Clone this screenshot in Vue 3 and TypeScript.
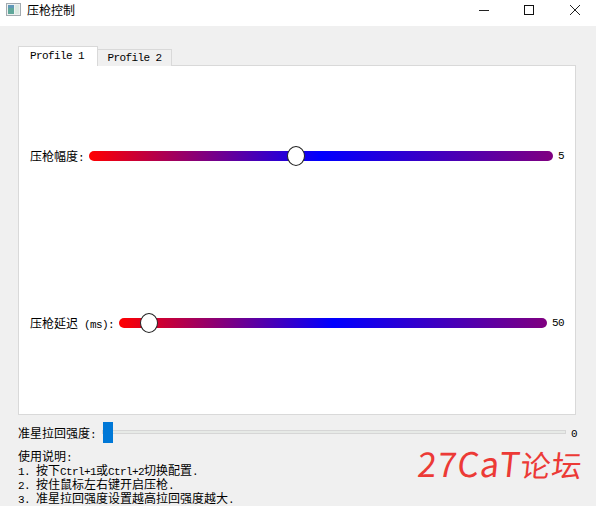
<script setup lang="ts">
const sliders = [
  { id: 1, name: "压枪幅度", unit: ":", value: "5", pos: 0.447 },
  { id: 2, name: "压枪延迟", unit: " (ms):", value: "50", pos: 0.07 },
];
</script>

<template>
  <div class="window">
    <div class="titlebar">
      <svg class="app-icon" width="16" height="16" viewBox="0 0 16 16">
        <rect x="0.5" y="1.5" width="14" height="12" fill="#eef0f0" stroke="#a3abb0" />
        <rect x="2" y="3" width="6" height="9" fill="#5fa79a" />
        <rect x="2" y="3" width="6" height="3" fill="#5f97b8" />
        <rect x="9" y="3" width="4" height="9" fill="#dbe9e2" />
      </svg>
      <span class="title">压枪控制</span>
      <div class="controls">
        <svg width="12" height="12" viewBox="0 0 12 12"><path d="M2 6.5h10" stroke="#222" fill="none" /></svg>
        <svg width="12" height="12" viewBox="0 0 12 12"><rect x="1.5" y="1.5" width="9" height="9" stroke="#111" fill="none" /></svg>
        <svg width="12" height="12" viewBox="0 0 12 12"><path d="M1 1l10 10M11 1L1 11" stroke="#222" fill="none" /></svg>
      </div>
    </div>

    <div class="page">
      <div class="tabs">
        <div class="tab active">Profile 1</div>
        <div class="tab">Profile 2</div>
      </div>

      <div class="pane">
        <div v-for="s in sliders" :key="s.id" class="row">
          <span class="cjk label">{{ s.name }}<span class="lat">{{ s.unit }}</span></span>
          <div class="track">
            <div class="knob" :style="{ left: s.pos * 100 + '%' }"></div>
          </div>
          <span class="lat">{{ s.value }}</span>
        </div>
      </div>

      <div class="strength">
        <span class="cjk label">准星拉回强度<span class="lat">:</span></span>
        <div class="groove">
          <div class="block"></div>
        </div>
        <span class="lat zero">0</span>
      </div>

      <div class="help cjk">
        <div class="line">使用说明<span class="lat">:</span></div>
        <div class="line"><span class="lat">1. </span>按下<span class="lat">Ctrl+1</span>或<span class="lat">Ctrl+2</span>切换配置<span class="lat">.</span></div>
        <div class="line"><span class="lat">2. </span>按住鼠标左右键开启压枪<span class="lat">.</span></div>
        <div class="line"><span class="lat">3. </span>准星拉回强度设置越高拉回强度越大<span class="lat">.</span></div>
      </div>

      <div class="mark">27CaT<span class="mark-cjk">论坛</span></div>
    </div>
  </div>
</template>

<style>
html,
body {
  margin: 0;
  overflow: hidden;
}
</style>

<style scoped>
.window {
  width: 596px;
  height: 506px;
  overflow: hidden;
  display: flex;
  flex-direction: column;
  background: #f0f0f0;
  color: #000;
}

.titlebar {
  height: 20px;
  padding: 0 0 6px 6px;
  flex: none;
  display: flex;
  align-items: center;
  background: #fff;
}

.app-icon {
  margin-right: 5px;
}

.title {
  font: 12px/16px "Noto Sans CJK SC", sans-serif;
}

.controls {
  margin-left: auto;
  display: flex;
  gap: 34px;
  padding-right: 15px;
}

.page {
  position: relative;
  flex: 1;
  padding: 20px 18px 0;
}

.tabs {
  display: flex;
  align-items: flex-end;
  height: 20px;
  margin-bottom: -1px;
}

.tab {
  position: relative;
  width: 73px;
  height: 16px;
  border: 1px solid #d9d9d9;
  border-bottom: 0;
  background: #f0f0f0;
  font: 11px/16px "Liberation Mono", monospace;
  letter-spacing: -0.6px;
  text-align: center;
  white-space: pre;
}

.tab.active {
  width: 76px;
  height: 19px;
  padding-right: 2px;
  line-height: 19px;
  background: #fff;
  z-index: 1;
}

.tab + .tab {
  margin-left: -1px;
}

.pane {
  box-sizing: border-box;
  height: 350px;
  margin-right: 2px;
  border: 1px solid #d9d9d9;
  background: #fff;
  display: flex;
  flex-direction: column;
  gap: 147px;
  padding: 80px 11px 0;
}

.row {
  height: 20px;
  display: flex;
  align-items: center;
  gap: 5px;
}

.cjk {
  font: 12px/14px "Noto Sans CJK SC", sans-serif;
  white-space: pre;
}

.label {
  margin-top: 2px;
}

.lat {
  font: 11px/14px "Liberation Mono", monospace;
  letter-spacing: -0.6px;
  white-space: pre;
}

.track {
  position: relative;
  flex: 1;
  height: 10px;
  border-radius: 5px;
  background: linear-gradient(to right, #ff0000 0%, #0000ff 50%, #800080 100%);
}

.knob {
  position: absolute;
  top: -5px;
  width: 18px;
  height: 20px;
  margin-left: -9px;
  box-sizing: border-box;
  border: 1px solid #222;
  border-radius: 50%;
  background: #fff;
}

.strength {
  height: 21px;
  margin-top: 7px;
  display: flex;
  align-items: center;
  gap: 6px;
}

.groove {
  position: relative;
  flex: 1;
  align-self: flex-start;
  height: 4px;
  margin: 8px -1px 0 0;
  border: 1px solid #d6d6d6;
  box-sizing: border-box;
  background: #e7eae7;
}

.block {
  position: absolute;
  left: 0;
  top: -9px;
  width: 10px;
  height: 21px;
  background: #0078d7;
}

.zero {
  margin: 2px 1px 0 0;
}

.help {
  margin-top: 6px;
}

.line {
  height: 14px;
}

.mark {
  position: absolute;
  left: 418px;
  top: 417px;
  color: #ec3a36;
  font: 400 34px/40px "Noto Sans CJK SC", sans-serif;
  letter-spacing: 1px;
  transform: skewX(-6deg);
  white-space: pre;
}

.mark-cjk {
  font-size: 30px;
}
</style>
